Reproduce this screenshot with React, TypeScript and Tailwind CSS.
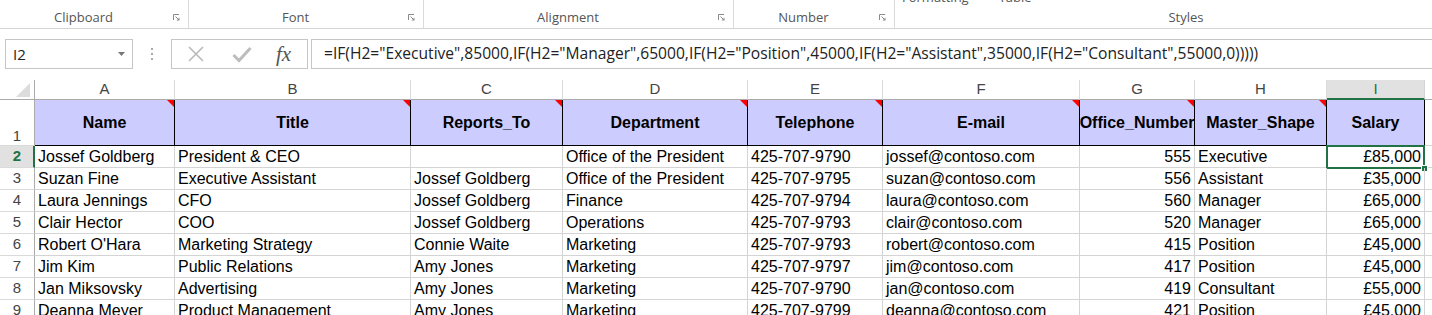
import React from "react";

const COLS = ["A", "B", "C", "D", "E", "F", "G", "H", "I"];

const HEAD = [
  "Name",
  "Title",
  "Reports_To",
  "Department",
  "Telephone",
  "E-mail",
  "Office_Number",
  "Master_Shape",
  "Salary",
];

// numbers sit at the right edge of the cell
const RIGHT = [false, false, false, false, false, false, true, false, true];

const ROWS: string[][] = [
  ["Jossef Goldberg", "President & CEO", "", "Office of the President", "425-707-9790", "jossef@contoso.com", "555", "Executive", "£85,000"],
  ["Suzan Fine", "Executive Assistant", "Jossef Goldberg", "Office of the President", "425-707-9795", "suzan@contoso.com", "556", "Assistant", "£35,000"],
  ["Laura Jennings", "CFO", "Jossef Goldberg", "Finance", "425-707-9794", "laura@contoso.com", "560", "Manager", "£65,000"],
  ["Clair Hector", "COO", "Jossef Goldberg", "Operations", "425-707-9793", "clair@contoso.com", "520", "Manager", "£65,000"],
  ["Robert O'Hara", "Marketing Strategy", "Connie Waite", "Marketing", "425-707-9793", "robert@contoso.com", "415", "Position", "£45,000"],
  ["Jim Kim", "Public Relations", "Amy Jones", "Marketing", "425-707-9797", "jim@contoso.com", "417", "Position", "£45,000"],
  ["Jan Miksovsky", "Advertising", "Amy Jones", "Marketing", "425-707-9790", "jan@contoso.com", "419", "Consultant", "£55,000"],
  ["Deanna Meyer", "Product Management", "Amy Jones", "Marketing", "425-707-9799", "deanna@contoso.com", "421", "Position", "£45,000"],
];

const FORMULA =
  '=IF(H2="Executive",85000,IF(H2="Manager",65000,IF(H2="Position",45000,IF(H2="Assistant",35000,IF(H2="Consultant",55000,0)))))';

function Launcher() {
  return (
    <svg width="7" height="7" viewBox="0 0 7 7" className="mb-[3px] shrink-0">
      <path d="M0.5 6V0.5H6" fill="none" stroke="#8a8a8a" strokeWidth="1" />
      <path d="M2.5 2.5L6 6" stroke="#8a8a8a" strokeWidth="1" />
      <path d="M3.5 6.5H6.5V3.5Z" fill="#8a8a8a" />
    </svg>
  );
}

function Group({ label, width }: { label: string; width: string }) {
  return (
    <div className={`flex h-full shrink-0 items-end border-r border-[#dadada] pb-[4px] ${width}`}>
      <span className="flex-1 text-center leading-none">{label}</span>
      <div className="flex w-[21px] justify-start pl-[6px]">
        <Launcher />
      </div>
    </div>
  );
}

function Ribbon() {
  return (
    <div className="flex h-[29px] overflow-hidden border-b border-[#d5d5d5] font-['Open_Sans',sans-serif] text-[13px] text-[#555]">
      <Group label="Clipboard" width="w-[189px]" />
      <Group label="Font" width="w-[235px]" />
      <Group label="Alignment" width="w-[310px]" />
      <Group label="Number" width="w-[161px]" />
      <div className="flex w-[582px] shrink-0 flex-col justify-between pb-[4px]">
        <div className="-mt-[10px] flex gap-[30px] pl-[7px] leading-[14px]">
          <span>Formatting</span>
          <span>Table</span>
        </div>
        <span className="text-center leading-none">Styles</span>
      </div>
    </div>
  );
}

function FormulaBar() {
  return (
    <div className="flex h-[51px] items-start pt-[10px] font-['Open_Sans',sans-serif]">
      <div className="ml-[5px] flex h-[30px] w-[128px] shrink-0 items-center border border-[#c6c6c6] pl-[7px] pr-[7px]">
        <span className="flex-1 text-[15px] text-[#222]">I2</span>
        <svg width="7" height="4" viewBox="0 0 7 4">
          <path d="M0 0H7L3.5 4Z" fill="#777" />
        </svg>
      </div>
      <div className="flex h-[30px] w-[38px] shrink-0 flex-col items-center justify-center gap-[3px]">
        <span className="h-[2px] w-[2px] bg-[#aaa]" />
        <span className="h-[2px] w-[2px] bg-[#aaa]" />
        <span className="h-[2px] w-[2px] bg-[#aaa]" />
      </div>
      <div className="flex h-[30px] w-[137px] shrink-0 items-center border border-[#c6c6c6]">
        <svg width="18" height="18" viewBox="0 0 18 18" className="ml-[15px]">
          <path d="M2 2L16 16M16 2L2 16" stroke="#b9b9b9" strokeWidth="1.6" />
        </svg>
        <svg width="20" height="18" viewBox="0 0 20 18" className="ml-[27px]">
          <path d="M1.5 10L7 15.5L18.5 3" fill="none" stroke="#bdbdbd" strokeWidth="3" />
        </svg>
        <span className="ml-[24px] font-['Liberation_Serif',serif] text-[21px] italic leading-none text-[#555]">
          fx
        </span>
      </div>
      <div className="ml-[3px] flex h-[30px] min-w-0 flex-1 items-center overflow-hidden border border-r-0 border-[#c6c6c6] pl-[12px]">
        <span className="whitespace-nowrap text-[15.6px] text-[#222]">{FORMULA}</span>
      </div>
    </div>
  );
}

function RedTick() {
  return (
    <svg width="7" height="7" viewBox="0 0 7 7" className="absolute right-0 top-0">
      <path d="M0 0H7V7Z" fill="#ff0000" />
    </svg>
  );
}

function Sheet() {
  return (
    <div className="grid grid-cols-[35px_140px_236px_152px_185px_135px_197px_115px_132px_98px_1fr] font-['Liberation_Sans',Arial,sans-serif] text-[16px] text-black">
      {/* column letters */}
      <div className="flex h-[20px] items-end justify-end border-b border-r border-[#ababab] pb-[2px] pr-[4px]">
        <svg width="14" height="14" viewBox="0 0 14 14">
          <path d="M14 0V14H0Z" fill="#dcdcdc" />
        </svg>
      </div>
      {COLS.map((c) =>
        c === "I" ? (
          <div
            key={c}
            className="flex h-[20px] items-center justify-center border-b-2 border-r border-b-[#217346] border-r-[#d4d4d4] bg-[#e1e1e1] text-[15px] text-[#217346]"
          >
            {c}
          </div>
        ) : (
          <div
            key={c}
            className="flex h-[20px] items-center justify-center border-b border-r border-b-[#ababab] border-r-[#dadada] text-[15px] text-[#444]"
          >
            {c}
          </div>
        ),
      )}
      <div className="h-[20px] border-b border-[#ababab]" />

      {/* row 1: headers */}
      <div className="flex h-[46px] items-end justify-center border-b border-r border-b-[#dadada] border-r-[#ababab] pb-[2px] text-[15px] leading-none text-[#444]">
        1
      </div>
      {HEAD.map((h, i) => (
        <div
          key={h}
          className="relative flex h-[46px] items-center justify-center overflow-hidden whitespace-nowrap border-b border-r border-black bg-[#ccccff] font-bold"
        >
          {h}
          {i < 8 ? <RedTick /> : null}
        </div>
      ))}
      <div className="h-[46px] border-b border-[#d4d4d4]" />

      {/* data rows */}
      {ROWS.map((row, r) => {
        const n = r + 2;
        const sel = n === 2;
        return (
          <React.Fragment key={n}>
            <div
              className={
                sel
                  ? "flex h-[22px] items-center justify-center border-b border-r-2 border-b-[#dadada] border-r-[#217346] bg-[#e1e1e1] pl-[1px] text-[15px] font-bold text-[#217346]"
                  : "flex h-[22px] items-center justify-center border-b border-r border-b-[#dadada] border-r-[#ababab] text-[15px] text-[#444]"
              }
            >
              {n}
            </div>
            {row.map((v, c) => (
              <div
                key={c}
                className={`relative flex h-[22px] items-center whitespace-nowrap border-b border-r border-[#d4d4d4] px-[3px] pt-[1px] ${
                  RIGHT[c] ? "justify-end" : "justify-start"
                }`}
              >
                {v}
                {sel && c === 8 ? (
                  <>
                    <div className="absolute -left-[1px] -top-[1px] bottom-[-2px] right-[-1px] border-2 border-[#217346]" />
                    <div className="absolute bottom-[-5px] right-[-4px] h-[7px] w-[7px] border border-white bg-[#217346]" />
                  </>
                ) : null}
              </div>
            ))}
            <div className="h-[22px] border-b border-[#d4d4d4]" />
          </React.Fragment>
        );
      })}
    </div>
  );
}

export default function App() {
  return (
    <div className="h-[315px] w-[1432px] overflow-hidden bg-white">
      <Ribbon />
      <FormulaBar />
      <Sheet />
    </div>
  );
}
